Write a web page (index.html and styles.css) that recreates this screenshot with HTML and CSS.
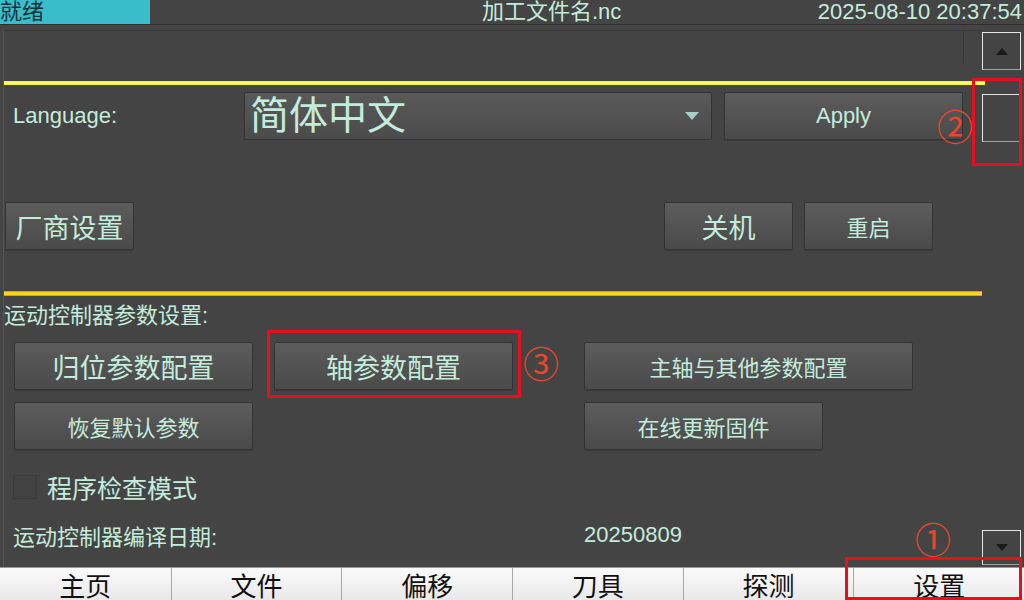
FILE: index.html
```html
<!DOCTYPE html>
<html lang="zh">
<head>
    <meta charset="UTF-8">
    <meta name="viewport" content="width=device-width, initial-scale=1.0">
    <title>设置</title>
    <link rel="stylesheet" href="styles.css">
</head>
<body>
    <div class="topbar">
        <div class="status">就绪</div>
        <div class="filename">加工文件名.nc</div>
        <div class="clock">2025-08-10 20:37:54</div>
    </div>

    <div class="main">
        <div class="content">
            <div class="strip"><span class="strip-cell"></span></div>
            <div class="rule-yellow"></div>

            <div class="row lang-row">
                <span class="lang-label">Language:</span>
                <div class="combo">
                    <span class="combo-text">简体中文</span>
                    <span class="caret"></span>
                </div>
                <button class="btn apply">Apply</button>
            </div>

            <div class="row power-row">
                <button class="btn big vendor">厂商设置</button>
                <button class="btn big shutdown">关机</button>
                <button class="btn reboot">重启</button>
            </div>

            <div class="rule-orange"></div>

            <div class="section-title">运动控制器参数设置:</div>

            <div class="param-grid">
                <button class="btn big w239">归位参数配置</button>
                <button class="btn big w239">轴参数配置</button>
                <button class="btn w329">主轴与其他参数配置</button>
                <button class="btn w239">恢复默认参数</button>
                <span></span>
                <button class="btn w239">在线更新固件</button>
            </div>

            <div class="check-row">
                <span class="check-box"></span>
                <span class="check-text">程序检查模式</span>
            </div>

            <div class="info-row">
                <span class="info-label">运动控制器编译日期:</span>
                <span class="info-value">20250809</span>
            </div>
        </div>

        <div class="scrollbar">
            <div class="sb-btn"><span class="arrow-up"></span></div>
            <div class="sb-handle"></div>
            <div class="sb-btn down"><span class="arrow-down"></span></div>
        </div>
    </div>

    <div class="tabs">
        <div class="tab">主页</div>
        <div class="tab">文件</div>
        <div class="tab">偏移</div>
        <div class="tab">刀具</div>
        <div class="tab">探测</div>
        <div class="tab">设置</div>
    </div>

    <!-- 标注 -->
    <div class="mark mark-scroll"></div>
    <div class="mark mark-axis"></div>
    <div class="mark mark-tab"></div>
    <span class="num num-2">②</span>
    <span class="num num-3">③</span>
    <span class="num num-1">①</span>
</body>
</html>
```

FILE: styles.css
```css
html, body {
    margin: 0;
    width: 1024px;
    height: 600px;
    overflow: hidden;
}
body {
    position: relative;
    background-color: #444444;
    color: #c4ecdc;
    font-family: "Liberation Sans", "Noto Sans CJK SC", sans-serif;
    font-size: 22px;
}
button {
    font-family: inherit;
}

/* 顶部状态栏 */
.topbar {
    display: flex;
    height: 24px;
    line-height: 24px;
    border-bottom: 1px solid #2e2e2e;
    font-size: 22px;
    white-space: nowrap;
}
.status {
    width: 150px;
    background-color: #3bbccb;
    color: #16323a;
}
.filename {
    margin-left: 332px;
}
.clock {
    margin-left: auto;
    padding-right: 2px;
}

/* 主区域 */
.main {
    display: flex;
    height: 542px;
}
.content {
    width: 978px;
    margin-left: 3px;
    margin-top: 5px;
    border-top: 1px solid #383838;
    border-left: 1px solid #555555;
    display: flex;
    flex-direction: column;
}
.strip {
    height: 50px;
    display: flex;
    justify-content: flex-end;
}
.strip-cell {
    width: 18px;
    height: 32px;
    border-left: 1px solid #383838;
}
.rule-yellow {
    height: 4px;
    margin-right: -3px;
    background: linear-gradient(#f2f22a, #ffff7a 50%, #f2f22a);
}
.rule-orange {
    height: 5px;
    margin-top: 41px;
    background: linear-gradient(#e79c00 0, #e79c00 1px, #ffd51c 1px, #ffd51c 4px, #e79c00 4px);
}

.row {
    display: flex;
    align-items: center;
    height: 48px;
}
.lang-row {
    margin-top: 7px;
}
.lang-label {
    width: 231px;
    padding-left: 9px;
}
.combo {
    width: 466px;
    height: 46px;
    display: flex;
    align-items: center;
    justify-content: space-between;
    border: 1px solid #333333;
    border-radius: 2px;
    background: linear-gradient(#595959, #4b4b4b);
}
.combo-text {
    font-size: 39px;
    line-height: 46px;
    padding-left: 5px;
}
.caret {
    width: 0;
    height: 0;
    margin-right: 12px;
    border-left: 7px solid transparent;
    border-right: 7px solid transparent;
    border-top: 8px solid #a7cfc4;
}

.btn {
    height: 48px;
    box-sizing: border-box;
    border: 1px solid #333333;
    border-radius: 2px;
    background: linear-gradient(#5c5c5c, #4a4a4a);
    color: #c4ecdc;
    font-size: 22px;
    padding: 0;
    box-shadow: 0 1px 0 #3a3a3a;
}
.btn.big {
    font-size: 27px;
}
.apply {
    width: 239px;
    margin-left: 12px;
}

.power-row {
    margin-top: 62px;
}
.vendor {
    width: 129px;
    margin-left: 1px;
}
.shutdown {
    width: 129px;
    margin-left: 530px;
}
.reboot {
    width: 129px;
    margin-left: 11px;
}

.section-title {
    margin-top: 9px;
    line-height: 22px;
    font-size: 22px;
}

.param-grid {
    display: grid;
    grid-template-columns: 260px 310px 330px;
    row-gap: 12px;
    margin-top: 15px;
    padding-left: 10px;
}
.w239 {
    width: 239px;
}
.w329 {
    width: 329px;
}

.check-row {
    display: flex;
    align-items: center;
    height: 26px;
    margin-top: 24px;
    padding-left: 9px;
}
.check-box {
    width: 22px;
    height: 22px;
    border: 1px solid #3a3a3a;
    background-color: #424242;
}
.check-text {
    margin-left: 10px;
    font-size: 25px;
}

.info-row {
    display: flex;
    align-items: center;
    height: 26px;
    margin-top: 22px;
    padding-left: 9px;
    font-size: 22px;
}
.info-label {
    width: 571px;
}

/* 滚动条 */
.scrollbar {
    width: 42px;
    display: flex;
    flex-direction: column;
    padding-top: 7px;
    box-sizing: border-box;
}
.sb-btn {
    width: 39px;
    height: 38px;
    box-sizing: border-box;
    border: 1px solid #e6e6e6;
    border-bottom-color: #a0a0a0;
    display: flex;
    align-items: center;
    justify-content: center;
}
.sb-btn.down {
    margin-top: auto;
    margin-bottom: 2px;
    height: 35px;
}
.sb-handle {
    width: 40px;
    height: 48px;
    margin-top: 24px;
    box-sizing: border-box;
    border: 1px solid #e6e6e6;
    border-right: none;
    border-bottom-color: #a0a0a0;
}
.arrow-up, .arrow-down {
    width: 0;
    height: 0;
    border-left: 6px solid transparent;
    border-right: 6px solid transparent;
}
.arrow-up {
    border-bottom: 7px solid #1a1a1a;
}
.arrow-down {
    border-top: 7px solid #1a1a1a;
}

/* 底部标签 */
.tabs {
    display: grid;
    grid-template-columns: repeat(6, 1fr);
    height: 40px;
    border-top: 1px solid #9a9a9a;
}
.tab {
    background: linear-gradient(#fbfbfb, #e4e4e4);
    border-left: 1px solid #a8a8a8;
    color: #111111;
    font-size: 26px;
    line-height: 30px;
    padding-top: 4px;
    text-align: center;
}
.tab:first-child {
    border-left: none;
}

/* 标注 */
.mark {
    position: absolute;
    border: 3px solid #e4101e;
    box-sizing: border-box;
}
.mark-scroll {
    left: 972px;
    top: 78px;
    width: 50px;
    height: 88px;
}
.mark-axis {
    left: 267px;
    top: 330px;
    width: 254px;
    height: 68px;
}
.mark-tab {
    left: 845px;
    top: 557px;
    width: 177px;
    height: 43px;
}
.num {
    position: absolute;
    font-family: "Noto Sans CJK SC", sans-serif;
    font-size: 36px;
    line-height: 36px;
    color: #e8472b;
}
.num-2 {
    left: 937px;
    top: 107px;
}
.num-3 {
    left: 523px;
    top: 344px;
}
.num-1 {
    left: 915px;
    top: 520px;
}
```
